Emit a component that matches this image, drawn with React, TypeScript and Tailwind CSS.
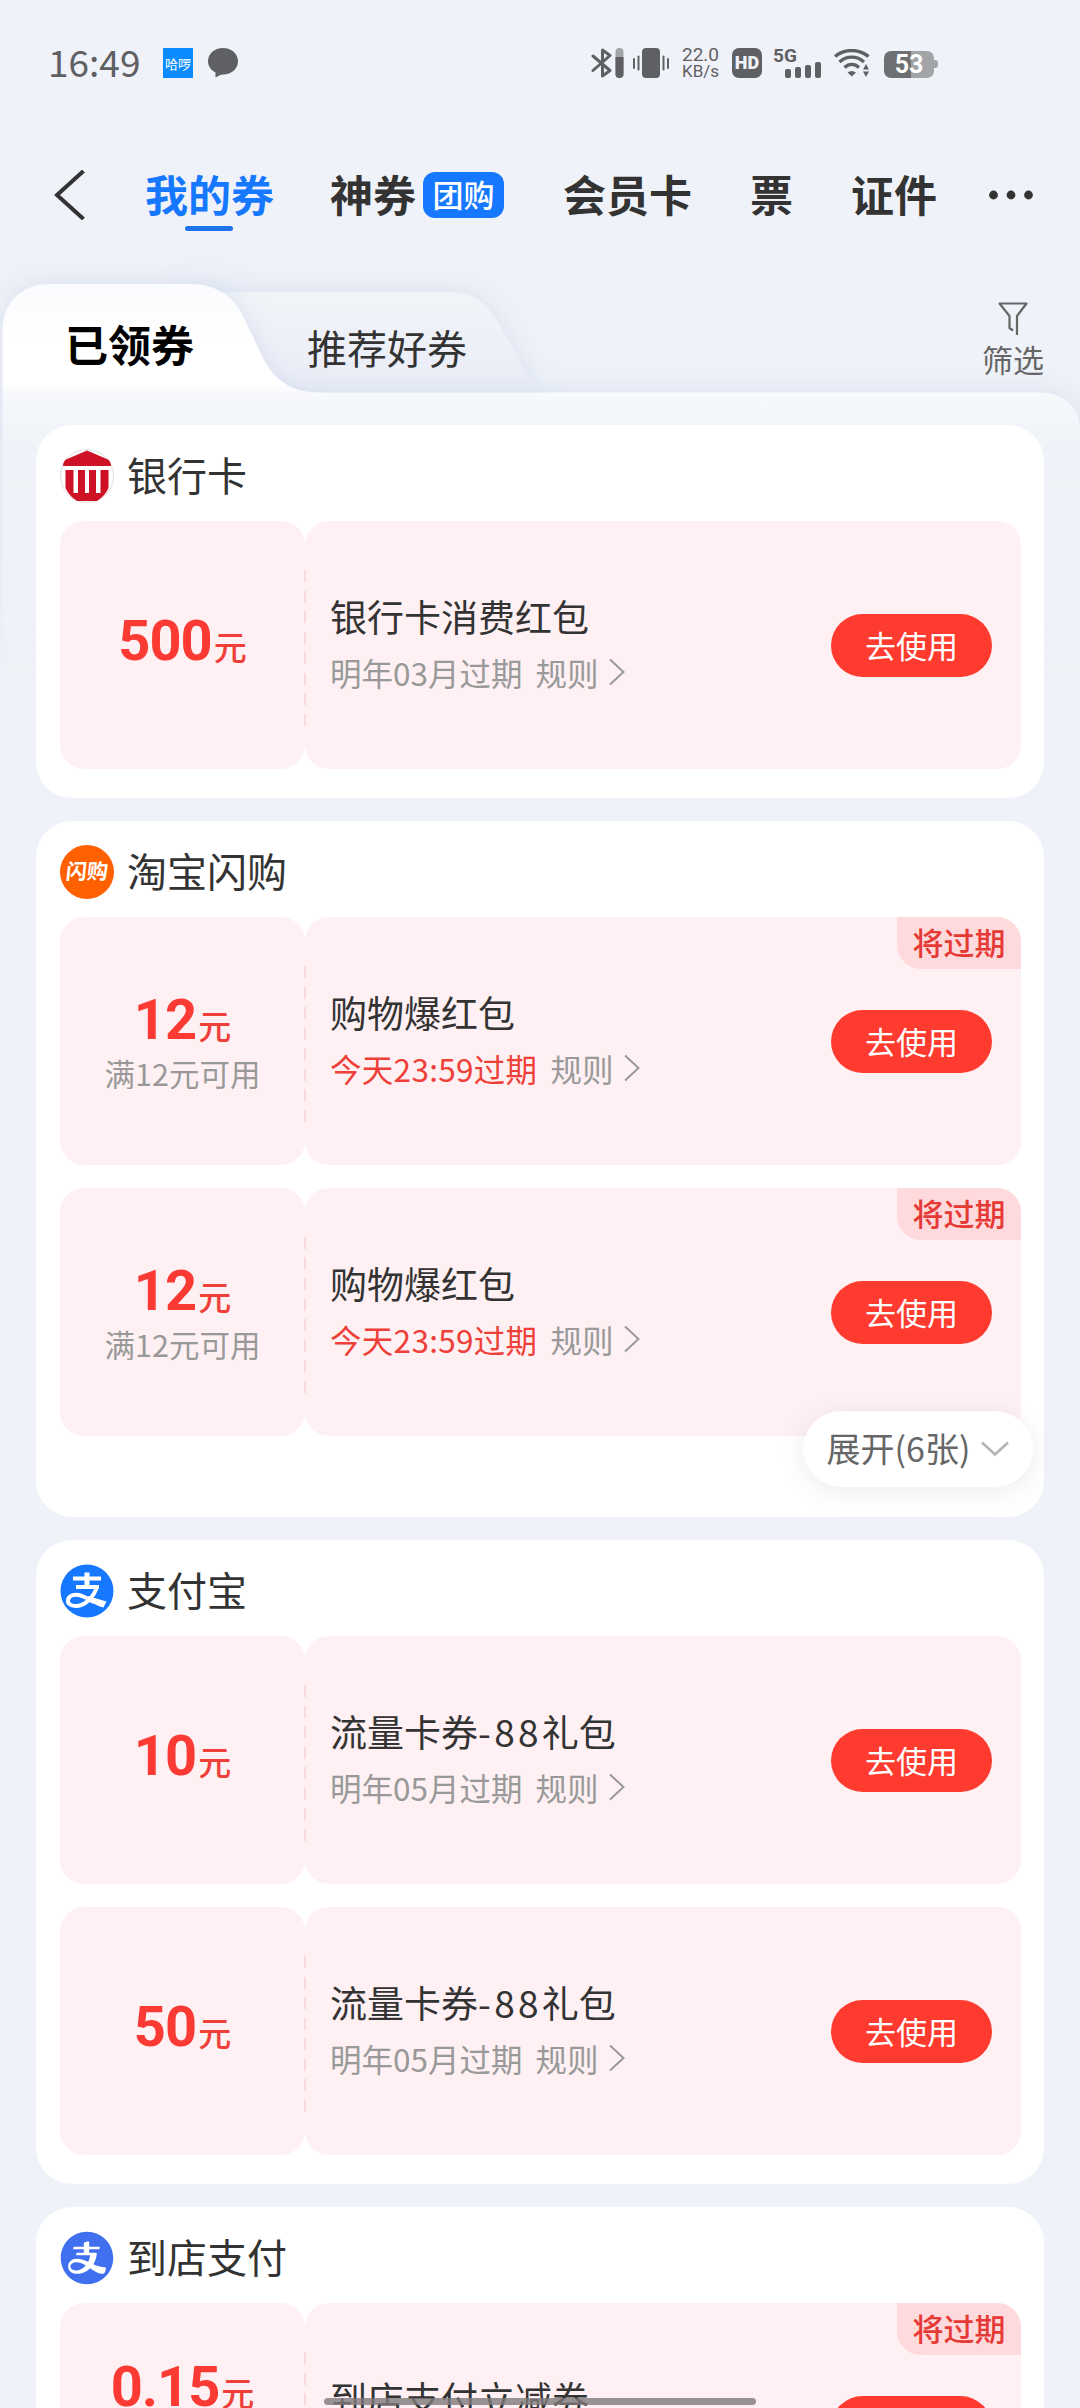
import type { ReactNode } from "react";
import { AiFillAlipayCircle } from "react-icons/ai";

type Coupon = {
    amount: string;
    condition?: string;
    title: string;
    expiry: string;
    urgent?: boolean;
    lifted?: boolean;
};

type CouponGroup = {
    name: string;
    icon: ReactNode;
    coupons: Coupon[];
    more?: string;
};

function BankLogo() {
    return (
        <svg viewBox="0 0 54 54" className="size-[54px]">
            <circle cx="27" cy="27" r="26.5" fill="#fff" stroke="#e3dede" />
            <path d="M27 1.5 L48 10.500 Q51 13 51 17 H3 Q3 13 6 10.500 Z" fill="#cf1126" />
            <path
                d="M5.500 21 H13.500 V44 H18 V21 H25 V44 H29 V21 H36 V44 H40.500 V21 H48.500 V39 Q45 47 37 52 H17 Q9 47 5.500 39 Z"
                fill="#cf1126"
            />
        </svg>
    );
}

function FlashLogo() {
    return (
        <div className="flex size-[54px] items-center justify-center rounded-full bg-[#ff6000]">
            <span className="-skew-x-6 pb-[3px] text-[21px] leading-none font-bold text-white">闪购</span>
        </div>
    );
}

function AlipayLogo() {
    return (
        <svg viewBox="0 0 54 54" className="size-[54px]" fill="none" stroke="#fff">
            <circle cx="27" cy="27" r="26.500" fill="#1677ff" stroke="none" />
            <path d="M13 14.500 H41 M16 23 H39" strokeWidth="4" />
            <path d="M27 8.500 V23" strokeWidth="5" />
            <path d="M37 22.500 C34 33 25 42 15.500 42 C10 42 7.500 39 8 36 C9 31 15 29.500 22 32 C27 34 31 36.500 34 38" strokeWidth="4" />
            <path d="M28 32 L46.500 37.500 L43.500 43.500 C39 42.500 33 39.500 27 36 Z" fill="#fff" stroke="none" />
        </svg>
    );
}

const groups: CouponGroup[] = [
    {
        name: "银行卡",
        icon: <BankLogo />,
        coupons: [{ amount: "500", title: "银行卡消费红包", expiry: "明年03月过期" }],
    },
    {
        name: "淘宝闪购",
        icon: <FlashLogo />,
        coupons: [
            { amount: "12", condition: "满12元可用", title: "购物爆红包", expiry: "今天23:59过期", urgent: true },
            { amount: "12", condition: "满12元可用", title: "购物爆红包", expiry: "今天23:59过期", urgent: true },
        ],
        more: "展开(6张)",
    },
    {
        name: "支付宝",
        icon: <AlipayLogo />,
        coupons: [
            { amount: "10", title: "流量卡券-88礼包", expiry: "明年05月过期" },
            { amount: "50", title: "流量卡券-88礼包", expiry: "明年05月过期" },
        ],
    },
    {
        name: "到店支付",
        icon: <AiFillAlipayCircle className="size-[60px] -m-[3px] text-[#4070f0]" />,
        coupons: [{ amount: "0.15", title: "到店支付立减券", expiry: "今天23:59过期", urgent: true, lifted: true }],
    },
];

function StatusBar() {
    return (
        <div className="flex h-[126px] shrink-0 items-center pl-12 text-[#5f6063]">
            <span className="w-[115px] pb-[3px] text-[37px] leading-none">16:49</span>
            <span className="flex size-[30px] items-center justify-center bg-[#0a8bff] text-[13px] leading-none text-white">
                哈啰
            </span>
            <svg viewBox="0 0 30 30" className="ml-[15px] size-[30px]" fill="currentColor">
                <path d="M15 0C23.500 0 30 5.800 30 13.200S23.500 26.500 15 26.500C13 26.500 11 27.500 7.500 29.500L7.500 24.500C3 22 0 18 0 13.200C0 5.800 6.500 0 15 0Z" />
            </svg>

            {/* Bluetooth with its own charge level */}
            <svg viewBox="0 0 33 30" className="ml-[353px] h-[30px] w-[33px]" fill="none">
                <path d="M2 8 L19 22.500 L11.500 28 V2 L19 7.500 L2 22.500" stroke="currentColor" strokeWidth="3" strokeLinejoin="round" strokeLinecap="round" />
                <rect x="24.500" width="8" height="30" rx="4" fill="#a3a4a7" />
                <path d="M24.500 9 H32.500 V26 A4 4 0 0 1 24.500 26 Z" fill="currentColor" />
            </svg>
            <svg viewBox="0 0 36 30" className="ml-[9px] h-[30px] w-9" fill="currentColor">
                <rect x="9" width="18" height="30" rx="4" />
                <rect x="0" y="10" width="2" height="11" rx="1" />
                <rect x="4.500" y="7.500" width="2" height="15" rx="1" />
                <rect x="29.500" y="7.500" width="2" height="15" rx="1" />
                <rect x="34" y="10" width="2" height="11" rx="1" />
            </svg>
            <div className="ml-3 flex w-[39px] flex-col items-center font-[Roboto] leading-[17px]">
                <span className="text-[19px]">22.0</span>
                <span className="text-[17px]">KB/s</span>
            </div>
            <span className="ml-3 flex size-[30px] items-center justify-center rounded-[7px] bg-[#5f6063] font-[Roboto] text-[18px] leading-none font-black text-[#eff2f8]">
                HD
            </span>
            <div className="relative ml-[11px] h-[30px] w-12">
                <span className="absolute top-0 left-0 font-[Roboto] text-[19px] leading-[15px] font-bold">5G</span>
                <div className="absolute right-0 bottom-0 flex items-end gap-[4px]">
                    <i className="h-[9px] w-[6px] rounded-[2px] bg-current" />
                    <i className="h-[11px] w-[6px] rounded-[2px] bg-current" />
                    <i className="h-[13px] w-[6px] rounded-[2px] bg-current" />
                    <i className="h-[16px] w-[6px] rounded-[2px] bg-current" />
                </div>
            </div>
            <svg viewBox="0 0 36 28" className="ml-[13px] h-7 w-9" fill="none" stroke="currentColor" strokeWidth="3.300">
                <path d="M1 7.500 C10 -0.500 25 -0.500 34.500 7.500" />
                <path d="M5.500 13 C12.500 6.500 23 6.500 30 13" />
                <path d="M10.500 18.500 C15 14.500 20.500 14.500 25 18.500" />
                <path d="M13.500 23.500 Q17.800 20.500 22 23.500 L17.800 27.500 Z" fill="currentColor" stroke="none" />
                <path d="M29 20.500 L32 15 L35 20.500 Z M29 22.500 L32 28 L35 22.500 Z" fill="currentColor" stroke="none" />
            </svg>
            <div className="ml-[14px] flex items-center pt-[2px]">
                <div className="flex h-[27px] w-[50px] items-center justify-center rounded-[7px] bg-linear-to-r from-[#6e6f73] from-[54%] to-[#a3a4a7] to-[54%] font-[Roboto] text-[25px] leading-none font-bold text-white">
                    53
                </div>
                <i className="h-2 w-[4px] rounded-r-[3px] bg-[#a3a4a7]" />
            </div>
        </div>
    );
}

function TopNav() {
    return (
        <nav className="flex h-[138px] shrink-0 items-center pl-[54px] text-[43px] leading-none font-bold text-[#333]">
            <svg viewBox="0 0 32 50" className="h-[50px] w-8" fill="none" stroke="currentColor" strokeWidth="4">
                <path d="M29.500 1 L3 25 L29.500 49" />
            </svg>
            <div className="relative ml-[59px] pb-1 text-[#1677ff]">
                我的券
                <span className="absolute top-[54px] left-[40px] h-[5px] w-12 rounded-full bg-[#1f74ec]" />
            </div>
            <span className="ml-[56px] pb-1">神券</span>
            <span className="ml-[7px] flex h-[46px] w-[81px] items-center justify-center rounded-xl bg-[#1677ff] pb-1 text-[31px] font-medium text-white">
                团购
            </span>
            <span className="ml-[59px] pb-1">会员卡</span>
            <span className="ml-[58px] pb-1">票</span>
            <span className="ml-[58px] pb-1">证件</span>
            <svg viewBox="0 0 44 10" className="ml-[52px] h-[10px] w-11" fill="currentColor">
                <circle cx="4.500" cy="5" r="4.400" />
                <circle cx="22" cy="5" r="4.400" />
                <circle cx="39.500" cy="5" r="4.400" />
            </svg>
        </nav>
    );
}

function TabShapes() {
    return (
        <svg
            viewBox="0 -50 1080 474"
            className="absolute -top-[50px] left-0 h-[474px] w-[1080px] [mask-image:linear-gradient(to_bottom,#000_55%,transparent)]"
        >
            <defs>
                <linearGradient id="active" x1="0" y1="20" x2="0" y2="200" gradientUnits="userSpaceOnUse">
                    <stop offset="0" stopColor="#fafbfe" />
                    <stop offset="0.300" stopColor="#fff" />
                    <stop offset="0.550" stopColor="#fff" />
                    <stop offset="0.620" stopColor="#f6f8fc" />
                    <stop offset="0.850" stopColor="#f0f3f8" />
                    <stop offset="1" stopColor="#eff2f8" />
                </linearGradient>
                <linearGradient id="idle" x1="0" y1="0" x2="0" y2="1">
                    <stop offset="0" stopColor="#f1f4f8" />
                    <stop offset="1" stopColor="#e9ecf6" />
                </linearGradient>
                <filter id="glow" x="-10%" y="-30%" width="120%" height="160%">
                    <feDropShadow dx="0" dy="0" stdDeviation="13" floodColor="#c9d3ea" floodOpacity="0.600" />
                </filter>
            </defs>
            <path d="M180 28 H450 C476 28 488 42 498 58 L540 132 H180 Z" fill="url(#idle)" filter="url(#glow)" />
            <path
                d="M2.500 520 V68 C2.500 38 22 20 50 20 H190 C216 20 232 32 242 50 L262 92 C272 114 290 128.500 318 128.500 H1040 C1062 128.500 1080 142 1080 166 V520 Z"
                fill="url(#active)"
                filter="url(#glow)"
            />
        </svg>
    );
}

function Tabs() {
    return (
        <div className="relative h-[161px] shrink-0">
            <TabShapes />
            <div className="relative flex h-full items-start leading-none">
                <span className="mt-[58px] ml-[65px] text-[43px] font-bold text-black">已领券</span>
                <span className="mt-[63px] ml-[113px] text-[40px] text-[#333]">推荐好券</span>
                <button className="mt-[38px] ml-[515px] flex flex-col items-center gap-[7px] text-[31px] leading-none text-[#666]">
                    <svg viewBox="0 0 30 34" className="h-[34px] w-[30px]" fill="none" stroke="currentColor" strokeWidth="2.200" strokeLinejoin="round">
                        <path d="M15 28.500 L11.500 26 V14 L1.500 1.500 H28.500 L19 14 V33" />
                    </svg>
                    筛选
                </button>
            </div>
        </div>
    );
}

// Digits are set a little wider than the characters around them
function CouponTitle({ title }: { title: string }) {
    return (
        <span className="text-[37px] leading-[56px] text-[#333]">
            {title.split(/([-\d]+)/).map((part, i) =>
                i % 2 ? (
                    <span key={i} className="tracking-[3.300px]">
                        {part}
                    </span>
                ) : (
                    part
                )
            )}
        </span>
    );
}

function CouponRow({ amount, condition, title, expiry, urgent, lifted }: Coupon) {
    return (
        <div className="relative flex h-[248px]">
            <div className={`flex w-[245px] flex-col items-center justify-center rounded-3xl bg-[#fff1f3] ${lifted ? "pb-[81px]" : "pb-[9px]"}`}>
                <div className="flex h-[72px] items-baseline text-[#fb3a33]">
                    <span className="font-[Roboto] text-[56px] leading-[72px] font-bold tracking-[-1px]">{amount}</span>
                    <span className="ml-[2px] text-[33px] leading-[36px] font-medium text-[#ee4038]">元</span>
                </div>
                {condition && <span className="text-[30.500px] leading-[34px] text-[#999]">{condition}</span>}
            </div>
            <div className="flex flex-1 items-center rounded-3xl bg-[#fff1f3] pr-[29px] pl-[25px]">
                <div className="flex flex-1 flex-col pb-[3px]">
                    <CouponTitle title={title} />
                    <div className="flex items-center text-[31.500px] leading-[56px] text-[#999]">
                        <span className={urgent ? "tracking-[0.300px] text-[#ee4038]" : ""}>{expiry}</span>
                        <span className="ml-[13px]">规则</span>
                        <svg viewBox="0 0 16 28" className="ml-[11px] h-7 w-4" fill="none" stroke="currentColor" strokeWidth="2">
                            <path d="M1 1.500 L14.500 14 L1 26.500" />
                        </svg>
                    </div>
                </div>
                <button className="h-[63px] w-[161px] rounded-full bg-[#ff3b30] text-[31px] leading-[58px] text-white">去使用</button>
            </div>
            <div className="absolute top-[49px] left-[244px] h-[156px] w-[2px] bg-[repeating-linear-gradient(to_bottom,#f8dade_0_12px,transparent_12px_20.500px)]" />
            {urgent && (
                <span className="absolute top-0 right-0 h-[52px] w-[124px] rounded-tr-3xl rounded-bl-3xl bg-[#ffdadd] text-center text-[31px] leading-[50px] font-medium text-[#e63a36]">
                    将过期
                </span>
            )}
        </div>
    );
}

function GroupCard({ group }: { group: CouponGroup }) {
    return (
        <section className={`relative shrink-0 rounded-[36px] bg-white pr-[23px] pl-6 ${group.more ? "pb-[81px]" : "pb-[29px]"}`}>
            <div className="flex h-24 items-center gap-[13px] pt-[6px] text-[40px] leading-none text-[#333]">
                {group.icon}
                <span className="pb-1">{group.name}</span>
            </div>
            <div className="flex flex-col gap-[23px]">
                {group.coupons.map((coupon, i) => (
                    <CouponRow key={i} {...coupon} />
                ))}
            </div>
            {group.more && (
                <button className="absolute right-[11px] bottom-[30px] flex h-[76px] w-[230px] items-center justify-center gap-[11px] rounded-full bg-white text-[34px] leading-none text-[#666] shadow-[0_4px_28px_rgba(0,0,0,0.08)]">
                    <span className="pb-[3px]">{group.more}</span>
                    <svg viewBox="0 0 28 16" className="h-4 w-7" fill="none" stroke="#b3b3b3" strokeWidth="2.500">
                        <path d="M1 1.500 L14 13.500 L27 1.500" />
                    </svg>
                </button>
            )}
        </section>
    );
}

export default function App() {
    return (
        <div className="relative flex h-[2408px] w-[1080px] flex-col overflow-hidden bg-[#eff2f8] font-['Noto_Sans_CJK_SC',sans-serif]">
            <StatusBar />
            <TopNav />
            <Tabs />
            <main className="relative flex flex-col gap-[23px] px-9">
                {groups.map((group) => (
                    <GroupCard key={group.name} group={group} />
                ))}
            </main>
            {/* Gesture bar */}
            <div className="absolute bottom-[3px] left-[324px] h-[7px] w-[432px] rounded-full bg-[#807a7c]/80" />
        </div>
    );
}
